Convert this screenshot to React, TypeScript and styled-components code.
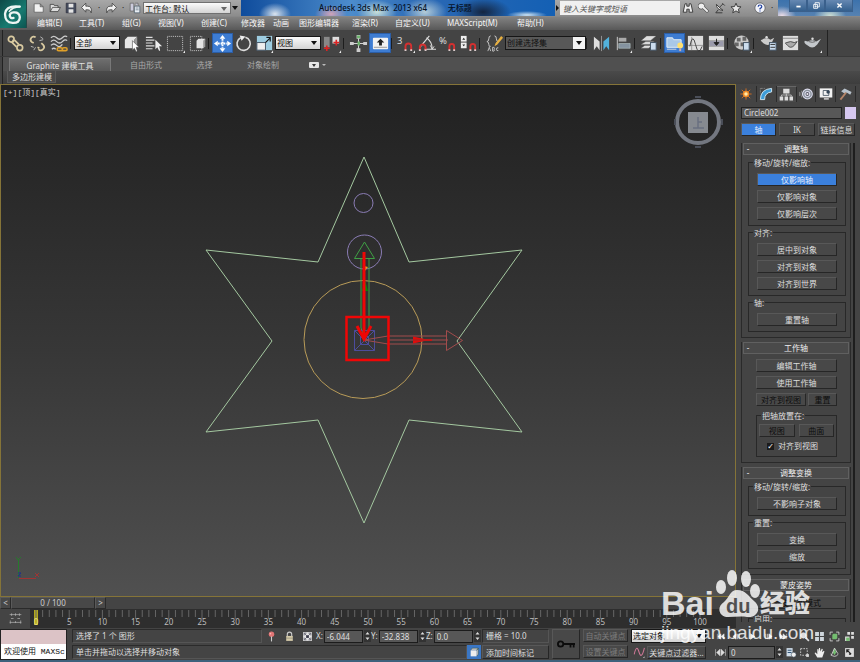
import React from "react";
import styled, { createGlobalStyle, css } from "styled-components";

const Global = createGlobalStyle`
  *, *::before, *::after { box-sizing: border-box; }
  html, body { margin: 0; background: #444; }
  body, button, input, select {
    font-family: "Noto Sans", "Noto Sans CJK SC", sans-serif;
    font-size: 8px;
    line-height: 12px;
    color: #dedede;
  }
  button, input, select { margin: 0; padding: 0; border: 0; border-radius: 0; background: none; appearance: none; outline: 0; }
`;

/* ---------- page frame ---------- */

const Page = styled.div`
  position: relative;
  display: flex;
  flex-direction: column;
  height: 100vh;
  overflow: hidden;
  background: #444;
`;

const Row = styled.div<{ $gap?: number }>`
  display: flex;
  align-items: center;
  gap: ${(p) => p.$gap ?? 0}px;
`;

/* ---------- header ---------- */

const Header = styled.header`
  flex: none;
  display: grid;
  grid-template-columns: 27px 1fr;
  height: 30px;
  background: linear-gradient(#8e8e8e 0 16px, #828282 17px, #585858 30px);
`;

const AppButton = styled.button`
  height: 28px;
  display: grid;
  place-items: center;
  border-right: 1px solid #254a48;
  background: linear-gradient(135deg, #0d4a48, #177a70 60%, #0c5450);
`;

const TitleBar = styled.div`
  display: flex;
  height: 16px;
  background: #174c98;
`;

const QuickAccess = styled.div`
  display: flex;
  align-items: center;
  width: 214px;
  padding-left: 4px;
  background: linear-gradient(#a8a8a8, #8c8c8c);
`;

const QuickButton = styled.button<{ $narrow?: boolean }>`
  width: ${(p) => (p.$narrow ? 8 : 16)}px;
  height: 15px;
  display: grid;
  place-items: center;
  color: #222;
`;

const TitleText = styled.h1`
  flex: 1;
  margin: 0;
  padding-left: 78px;
  font-size: 8px;
  font-weight: 500;
  line-height: 15px;
  color: #061226;
  white-space: pre;
  background:
    radial-gradient(ellipse 16px 11px at 34px 14px, #dbe4ee, transparent),
    radial-gradient(ellipse 16px 9px at 90px 14px, #d2a4b8, transparent),
    radial-gradient(ellipse 20px 12px at 136px 12px, #c9dfd9, transparent),
    radial-gradient(ellipse 22px 14px at 184px 12px, #b4ccd8, transparent),
    radial-gradient(ellipse 28px 14px at 242px 12px, #142540, transparent),
    radial-gradient(ellipse 20px 4px at 286px 15px, #d0e4f2, transparent),
    linear-gradient(90deg, #0f4c9c, #4c8ccc 35%, #2a68b4 58%, #1460b4);
`;

const InfoCenter = styled.div`
  display: flex;
  align-items: center;
  width: 223px;
  background: linear-gradient(#a8a8a8, #8c8c8c);
`;

const SearchArrow = styled.button`
  width: 5px;
  display: grid;
  place-items: center;
`;

const SearchInput = styled.input`
  width: 120px;
  height: 14px;
  padding-left: 3px;
  background: #f0f0f0;
  color: #333;
  &::placeholder { color: #555; font-style: italic; opacity: 1; }
`;

const WindowButtons = styled.div`
  display: flex;
  width: 82px;
  align-items: flex-start;
  padding-left: 11px;
  background:
    radial-gradient(ellipse 14px 10px at 4px 16px, #f0dfe8, transparent),
    radial-gradient(ellipse 16px 10px at 52px 16px, #cfe0d4, transparent),
    linear-gradient(#3c72ac, #5682b2);
`;

const WindowButton = styled.button`
  width: 18px;
  height: 12px;
  display: grid;
  place-items: center;
  border: 1px solid #3a608c;
  border-top: 0;
  background: linear-gradient(#6688b2, #34608e);
  &:last-child { width: 28px; }
`;

const MenuBar = styled.nav`
  display: grid;
  grid-template-columns: 42px 43px 36px 43px 40px 32px 26px 53px 43px 52px 70px 42px;
  padding-left: 10px;
  height: 14px;
`;

const MenuItem = styled.button`
  text-align: left;
  white-space: nowrap;
  line-height: 14px;
  color: #f6f6f6;
`;

/* ---------- toolbar ---------- */

const Toolbar = styled.div`
  flex: none;
  display: flex;
  align-items: center;
  align-self: flex-start;
  height: 26px;
  padding: 0 4px;
  border-right: 1px solid #222;
  background: #444;
  box-shadow: inset 2px 0 #444, inset 3px 0 #222;
`;

const ToolGroup = styled.div<{ $cell: number }>`
  display: grid;
  grid-auto-flow: column;
  grid-auto-columns: ${(p) => p.$cell}px;
`;

const ToolButton = styled.button<{ $on?: boolean }>`
  height: 20px;
  display: grid;
  place-items: center;
  ${(p) => p.$on && css`background: #3d7cd2; box-shadow: inset 0 0 0 1px #2c5ea6;`}
`;

const Separator = styled.span`
  width: 4px;
  height: 11px;
  border-left: 1px solid #1d1d1d;
`;

const Combo = styled.label<{ $w: number; $tone?: "dark" | "bar" }>`
  display: grid;
  grid-template-columns: 1fr 13px;
  align-items: center;
  width: ${(p) => p.$w}px;
  height: ${(p) => (p.$tone === "bar" ? 12 : 14)}px;
  border: 1px solid ${(p) => (p.$tone === "bar" ? "#707070" : "#161616")};
  background: ${(p) =>
    p.$tone === "dark"
      ? "linear-gradient(90deg, #585858 0 67px, #f3f3f3 67px)"
      : "linear-gradient(#fafafa, #d4d4d4)"};
  > select {
    grid-area: 1 / 1 / 2 / 3;
    min-width: 0;
    width: 100%;
    height: 12px;
    line-height: 12px;
    padding-left: 1px;
    color: #111;
  }
  > svg { grid-area: 1 / 2; justify-self: center; pointer-events: none; }
`;

/* ---------- ribbon ---------- */

const RibbonTabs = styled.div`
  flex: none;
  display: grid;
  grid-template-columns: 102px 70px 47px 70px 40px;
  align-items: end;
  padding-left: 9px;
  height: 15px;
  background: #505050;
  border-top: 1px solid #393939;
  box-shadow: inset 2px 0 #444, inset 3px 0 #222;
`;

const RibbonTab = styled.button<{ $on?: boolean }>`
  height: 13px;
  line-height: 13px;
  color: ${(p) => (p.$on ? "#e2e2e2" : "#a8a8a8")};
  ${(p) => p.$on && css`
    line-height: 11px;
    border: 1px solid #787878;
    border-bottom: 0;
    background: linear-gradient(#6e6e6e, #575757);
  `}
`;

const RibbonBody = styled.div`
  flex: none;
  height: 13px;
  padding-left: 7px;
  background: linear-gradient(#4a4a4a, #3d3d3d);
  box-shadow: inset 2px 0 #444, inset 3px 0 #222;
`;

const RibbonPanelButton = styled.button`
  height: 12px;
  padding: 0 3px 0 4px;
  border: 1px solid #5a5a5a;
  border-top: 0;
  line-height: 11px;
  background: #4a4a4a;
`;

/* ---------- work area ---------- */

const Work = styled.main`
  flex: 1;
  display: grid;
  grid-template-columns: 1fr 124px;
  grid-template-rows: minmax(0, 1fr);
  min-height: 0;
`;

const Stage = styled.section`
  display: flex;
  flex-direction: column;
`;

const Viewport = styled.div`
  position: relative;
  flex: 1;
  display: flex;
  justify-content: space-between;
  align-items: flex-start;
  border: 1px solid #857438;
  background: linear-gradient(#212121, #373737 52%, #505050);
`;

const ViewLabel = styled.span`
  padding: 2px 2px;
  color: #d0d0d0;
  font-family: "Liberation Mono", "Noto Sans CJK SC", monospace;
`;

const Scene = styled.svg`
  position: absolute;
  inset: -1px;
  width: calc(100% + 2px);
  height: calc(100% + 2px);
  fill: none;
`;

const CubeHolder = styled.div`
  padding: 7px 11px;
  line-height: 0;
`;

const SliderRow = styled.div`
  display: grid;
  grid-template-columns: 11px 84px 11px;
  height: 12px;
  background: #444;
`;

const SliderPart = styled.button`
  border: 1px solid #2a2a2a;
  border-top-color: #5a5a5a;
  border-left-color: #5a5a5a;
  background: #484848;
  line-height: 10px;
  color: #ccc;
`;

const TrackBar = styled.div`
  display: grid;
  grid-template-columns: 36px 1fr 36px;
  height: 19px;
  background: #2e2e2e;
  > svg:last-of-type { width: 100%; height: 19px; overflow: visible; }
`;

const TrackToggle = styled.button`
  width: 30px;
  background: #444;
  display: grid;
  place-items: center;
`;

/* ---------- command panel ---------- */

const Side = styled.aside`
  overflow: hidden;
  margin-bottom: 6px;
  padding: 2px 4px 0 5px;
  background: #444;
`;

const PanelTabs = styled.div`
  display: grid;
  grid-template-columns: repeat(6, 1fr);
  height: 16px;
  margin: 0 0 5px -4px;
`;

const PanelTab = styled.button<{ $on?: boolean }>`
  display: grid;
  place-items: center;
  border-right: 1px solid #2b2b2b;
  ${(p) => p.$on && css`border-top: 1px solid #666; background: #4b4b4b;`}
`;

const NameInput = styled.input`
  flex: 1;
  min-width: 0;
  height: 12px;
  padding-left: 2px;
  border: 1px solid #222;
  background: #585858;
`;

const Swatch = styled.button`
  width: 11px;
  height: 12px;
  background: #d6c8f0;
`;

const tones = {
  normal: "#dedede",
  dim: "#0c0c0c",
  muted: "#7c7c7c",
};

const PushButton = styled.button<{ $on?: boolean; $tone?: keyof typeof tones }>`
  height: 13px;
  flex: 1;
  white-space: nowrap;
  line-height: 11px;
  border: 1px solid;
  border-color: #585858 #262626 #262626 #585858;
  background: ${(p) => (p.$on ? "#3b80dc" : "#484848")};
  color: ${(p) => (p.$on ? "#e4eeff" : tones[p.$tone ?? "normal"])};
`;

const PanelButtons = styled.div`
  display: grid;
  grid-template-columns: 35px 36px 37px;
  gap: 3px;
  padding: 4px 0 7px;
`;

const Rollouts = styled.div`
  margin-right: 1px;
  padding-right: 2px;
  border-right: 2px solid #1e1e1e;
`;

const Rollout = styled.section`
  margin-bottom: 4px;
  padding: 0 1px;
  border: 1px solid #2a2a2a;
  border-top: 0;
`;

const RolloutHeader = styled.button`
  display: grid;
  grid-template-columns: 8px 1fr 8px;
  width: 100%;
  height: 12px;
  border: 1px solid #606060;
  background: #4a4a4a;
  line-height: 10px;
  color: #eee;
`;

const RolloutBody = styled.div<{ $deep?: boolean }>`
  display: flex;
  flex-direction: column;
  gap: 4px;
  padding: ${(p) => (p.$deep ? "5px 12px 5px 13px" : "5px 3px 5px 5px")};
  > button { flex: none; }
`;

const Split = styled.div`
  display: grid;
  grid-template-columns: 50px 1fr;
  gap: 2px;
`;

const Group = styled.fieldset<{ $tight?: boolean }>`
  min-width: 0;
  margin: 0;
  padding: ${(p) => (p.$tight ? "3px 2px 5px" : "5px 8px")};
  border: 1px solid #282828;
  display: flex;
  flex-direction: column;
  gap: 4px;
  &:first-child, fieldset + & { margin-top: -3px; }
  > legend { margin-left: ${(p) => (p.$tight ? 2 : -4)}px; padding: 0 1px; line-height: 11px; }
  > button { flex: none; }
`;

const CheckLabel = styled.label`
  display: flex;
  align-items: center;
  gap: 4px;
  padding-left: 8px;
  height: 10px;
`;

const CheckBox = styled.input`
  width: 7px;
  height: 7px;
  background: #1b1b1b;
  display: grid;
  place-items: center;
  &:checked::after { content: "✓"; font: bold 8px/7px "DejaVu Sans", sans-serif; color: #fff; }
`;

/* ---------- status bar ---------- */

const Status = styled.footer`
  flex: none;
  display: flex;
  height: 34px;
  padding-top: 1px;
  background: #444;
  border-bottom: 2px solid #3d617c;
`;

const TwoRows = styled.div<{ $w?: number; $ml?: number }>`
  ${(p) => (p.$w ? css`width: ${p.$w}px;` : css`flex: 1;`)}
  min-width: 0;
  margin-left: ${(p) => p.$ml ?? 3}px;
  display: grid;
  grid-template-rows: 14px 14px;
  row-gap: 2px;
`;

const Listener = styled.div`
  width: 67px;
  height: 31px;
  display: grid;
  grid-template-rows: 14px 15px;
  border: 1px solid #222;
  > input:first-child { background: #dcc3c6; }
  > input:last-child { background: #fff; color: #111; padding-left: 3px; font-family: "Liberation Mono", "Noto Sans CJK SC", monospace; }
  > input { min-width: 0; width: 100%; }
`;

const Cell = styled.output`
  flex: 1;
  height: 14px;
  padding-left: 3px;
  line-height: 12px;
  white-space: nowrap;
  border: 1px solid #2b2b2b;
  border-right-color: #555;
  border-bottom-color: #555;
`;

const CellButton = styled(PushButton)`
  height: 14px;
  text-align: left;
  padding-left: 3px;
`;

const SmallButton = styled.button<{ $w?: number; $on?: boolean }>`
  width: ${(p) => p.$w ?? 16}px;
  height: 14px;
  flex: none;
  display: grid;
  place-items: center;
  background: ${(p) => (p.$on ? "#3a76c4" : "none")};
`;

const KeyButton = styled(PushButton)`
  flex: none;
  width: 28px;
  height: 30px;
  margin-left: 3px;
  display: grid;
  place-items: center;
`;

const SpinField = styled.label`
  display: flex;
  align-items: center;
  gap: 1px;
  width: 55px;
  > input {
    flex: 1;
    min-width: 0;
    height: 13px;
    padding-left: 2px;
    border: 1px solid #1c1c1c;
    background: #575757;
  }
`;

const NavGrid = styled.div`
  display: grid;
  grid-template-columns: 13px repeat(4, 15px);
  grid-template-rows: 14px 14px;
  row-gap: 2px;
  margin-right: 3px;
`;

/* ---------- watermark ---------- */

const Mark = styled.div`
  position: absolute;
  right: 40px;
  bottom: 18px;
  width: 159px;
  opacity: 0.82;
  color: #fff;
  pointer-events: none;
  font-family: "Liberation Sans", "Noto Sans CJK SC", sans-serif;
`;

const MarkTop = styled.div`
  display: grid;
  grid-template-columns: 54px 45px 54px;
  align-items: end;
  font-weight: 700;
  line-height: 30px;
  > b:first-child { font-size: 34px; }
  > b:last-child { font-size: 25px; }
`;

const MarkUrl = styled.div`
  margin-top: 4px;
  font-size: 19px;
  line-height: 22px;
`;

/* ---------- icons ---------- */

const art: Record<string, React.ReactNode> = {
  link: <g stroke="#d8c9a0" strokeWidth="1.8"><circle cx="5.500" cy="5.500" r="3" /><circle cx="14.500" cy="14.500" r="3" /><path d="M8 6l-1.500 3 4.500 4.500M9 6.500l4.500 4.500" /></g>,
  unlink: <g stroke="#d8c9a0" strokeWidth="1.8"><path d="M8 3.500a3 3 0 1 0-4 5l2 1M11 16a3 3 0 0 0 5-4.500l-2-2M12 15l-2-1" /><path d="M13 3l3 2M12 7l4-1M3 13l3 1M6 17l2-3" stroke="#bbb" strokeWidth="1" /></g>,
  bind: <g><path d="M1 4q3-3 6 0t6 0 5-1M1 8q3-3 6 0t6 0 5-1M1 12q3-3 6 0t6-1M2 16q2-2 4 0" stroke="#ccc" strokeWidth="1.4" /><path d="M9 14.500h2.500a1.500 1.500 0 0 1 0 3H9a1.500 1.500 0 0 1 0-3zM14.500 14.500h2a1.500 1.500 0 0 1 0 3h-2a1.500 1.500 0 0 1 0-3z" stroke="#e0a028" strokeWidth="1.6" /></g>,
  select: <g><path d="M3 6l3-3h10l-3 3v9H3z" fill="#e8e8e8" /><path d="M13 6l3-3v9l-3 3z" fill="#999" /><path d="M11 7v10l2-2 2 4 1-1-1-4h3z" fill="#fff" stroke="#444" strokeWidth=".6" /></g>,
  byName: <g><path d="M2 3.500h7M2 6.500h9M2 9.500h7M2 12.500h9M2 15.500h7" stroke="#ddd" strokeWidth="1.200" /><path d="M12 6v10l2-2 2 4 1-1-1-4h3z" fill="#eee" /></g>,
  region: <g><rect x="1.500" y="2.500" width="16" height="15" stroke="#ccc" strokeDasharray="1 1" /><path d="M18 20h2v-3z" fill="#eee" /></g>,
  crossing: <g><rect x="2.500" y="2.500" width="12" height="15" stroke="#ccc" strokeDasharray="1 1" /><path d="M9 7l2-2h7v8l-2 2H9z" fill="#e4e4e4" /><path d="M16 7l2-2v8l-2 2z" fill="#999" /></g>,
  move: <g fill="#fff"><path d="M10 1l3 4H7zM10 19l3-4H7zM1 10l4-3v6zM19 10l-4-3v6z" /><path d="M10 5v10M5 10h10" stroke="#fff" strokeDasharray="2 1" strokeWidth="2" /></g>,
  rotate: <g><path d="M12 3.500a7 7 0 1 1-5 .500" stroke="#ddd" strokeWidth="1.700" /><path d="M6 1.500l6 1-4 4.500z" fill="#eee" /></g>,
  scale: <g><rect x="2" y="2" width="16" height="15" fill="#9dcce0" /><rect x="2" y="9" width="9" height="8" fill="#eee" stroke="#456" /><path d="M11 9l5-5M12 3.500h4V8" stroke="#111" strokeWidth="1.200" /><path d="M17 20h2v-3z" fill="#eee" /></g>,
  pivot: <g><rect x="1" y="3" width="6" height="11" fill="#888" /><rect x="10" y="3" width="7" height="7" fill="#ddd" /><path d="M4 12v6M1 15h6M14 6v6M11 9h6" stroke="#d22" strokeWidth="1.700" /><path d="M17 20h2v-3z" fill="#eee" /></g>,
  manip: <g><path d="M10 4v12M4 10h12" stroke="#ddd" /><path d="M8 1h4v4H8zM8 15h4v4H8zM1 8.500h4v3H1zM15 8.500h4v3h-4z" fill="#ccc" /><path d="M8.500 1.500h3v3h-3zM9 8h2.500v4H9z" fill="#6cb46c" /></g>,
  keymode: <g><rect x="2" y="4" width="16" height="12" rx="1" fill="#f2f2f2" /><path d="M3 14h14" stroke="#999" /><path d="M10 5l4 4h-2.500v3h-3V9H6z" fill="#222" /></g>,
  snap3: <g><text x="1" y="11" fontSize="10" fill="#ddd">3</text><path d="M10 17v-4a3 3 0 0 1 6 0v4" stroke="#d43030" strokeWidth="2" /><path d="M9 17h2M15 17h2" stroke="#fff" strokeWidth="1.500" /><path d="M18 20h2v-3z" fill="#eee" /></g>,
  angle: <g><path d="M3 14L13 2M10 4q6 4 6 12M8 16h12" stroke="#ddd" strokeWidth="1.200" /><path d="M3 17v-3a3 3 0 0 1 6 0v3" stroke="#d43030" strokeWidth="2" /><path d="M2 17h2M8 17h2" stroke="#fff" strokeWidth="1.500" /><path d="M14 12l2 4 2-3" stroke="#ddd" /></g>,
  percent: <g><text x="1" y="11" fontSize="10" fill="#ddd">%</text><path d="M12 17v-4a2.500 2.500 0 0 1 5 0v4" stroke="#d43030" strokeWidth="2" /><path d="M11 17h2M16 17h2" stroke="#fff" strokeWidth="1.500" /></g>,
  spinSnap: <g><rect x="2" y="2" width="6" height="6" fill="#eee" /><rect x="2" y="9" width="6" height="6" fill="#eee" /><path d="M3.500 6L5 4l1.500 2zM3.500 11L5 13l1.500-2z" fill="#222" /><path d="M12 17v-4a2.500 2.500 0 0 1 5 0v4" stroke="#d43030" strokeWidth="2" /><path d="M11 17h2M16 17h2" stroke="#fff" strokeWidth="1.500" /></g>,
  namedSel: <g><path d="M6 2Q4 2 4 5t-2 3q2 0 2 3t2 2M10 2q2 0 2 3t2 3q-2 0-2 3" stroke="#ccc" /><path d="M17 2l-6 8-1 3 3-2 6-7z" fill="#e8b040" /><path d="M3 18l1.500-4L6 18M8 14v4h1.500q1-1 0-2 1-1 0-2zM14 14.500q-2-.500-2 1.500t2 1.500" stroke="#ddd" strokeWidth=".8" /></g>,
  mirror: <g><path d="M2 3l6 5v9l-3-4-3 4z" fill="#ddd" /><path d="M18 3l-6 5v9l3-4 3 4z" fill="#52b2dc" /><path d="M10 2v16" stroke="#aaa" strokeWidth=".8" /></g>,
  align: <g><path d="M3.500 3v14" stroke="#ccc" /><path d="M5 4h8v4H5z" fill="#aaa" /><path d="M5 10h12v5H5z" fill="#8593a0" stroke="#bcc" strokeWidth=".6" /><path d="M17 20h2v-3z" fill="#eee" /></g>,
  layers: <g><path d="M1 7l6-5h10l-6 5zM1 11l5-3h9l-5 3zM1 15l4-3h8l-4 3z" fill="#ddd" stroke="#555" strokeWidth=".4" /><rect x="11" y="9" width="6" height="8" fill="#cde" stroke="#456" /></g>,
  ribbon: <g><path d="M2 4h6l1 2h8v8H2z" fill="#a9c8e8" stroke="#e8f0f8" /><path d="M2 16h10" stroke="#ddd" /><circle cx="16" cy="12" r="3" fill="#ffe070" /><path d="M15 15h2v3h-2z" fill="#caa" /></g>,
  curve: <g><rect x="2" y="2" width="16" height="15" fill="#ddd" /><path d="M2 12h16M6 3v14" stroke="#777" strokeWidth=".7" /><path d="M4 13q3-15 6-2t7 2" stroke="#333" strokeWidth=".9" /></g>,
  schematic: <g><rect x="2" y="2" width="16" height="5" fill="#ddd" /><rect x="2" y="13" width="16" height="4" fill="#ddd" /><path d="M2.500 7h15v6h-15z" stroke="#aaa" fill="#99a" /><path d="M10 5v5M7.500 9L10 12l2.500-3z" stroke="#222" fill="#222" /></g>,
  material: <g><circle cx="9" cy="9" r="7.500" fill="#ccc" /><path d="M4 4h4v4H4zM10 3h4v4h-4zM2 9h4v4H2zM8 9h4v4H8z" fill="#666" /><rect x="11" y="9" width="6" height="8" fill="#cde" stroke="#456" /><path d="M18 20h2v-3z" fill="#eee" /></g>,
  rsetup: <g><path d="M3 6q5-3 9 0l4-2-3 6q-4 3-8 0Q0 6 3 6z" fill="#ccc" /><circle cx="8" cy="3.500" r="1.300" fill="#ddd" /><rect x="11" y="9" width="7" height="8" fill="#cde" stroke="#456" /><path d="M12 11h5M12 14h5" stroke="#333" /></g>,
  rframe: <g><rect x="2" y="2" width="16" height="15" fill="#ddd" /><path d="M2 4.500h16" stroke="#888" /><path d="M6 9q4-2 8 0l3-1-3 4q-4 4-7 0Q3 9 6 9z" fill="#aaa" stroke="#333" strokeWidth=".8" /></g>,
  teapot: <g><path d="M5 8q5-3 9 0l5-3-4 6q-5 6-10 1Q0 9 2 7z" fill="#c4c8cc" /><path d="M6 8q4 1.500 7 0" stroke="#666" /><circle cx="10" cy="5" r="1.300" fill="#ddd" /><path d="M18 20h2v-3z" fill="#eee" /></g>,
  newFile: <path d="M2 3h10l5 5v9H2zM12 3v5h5" fill="#f2f2f2" stroke="#444" />,
  open: <path d="M2 16V4h6l1 2h6v3M2 16l4-7h13l-4 7z" fill="#ddd" stroke="#333" strokeWidth="1.200" />,
  save: <g><path d="M2 2h16v16H2z" fill="#444b5c" stroke="#223" /><path d="M6 3h8v6H6zM6 12h8v6H6z" fill="#e4e4e4" /></g>,
  undo: <path d="M1 9l7-7v5h3q8 0 6 11-1-6-9-5v4z" fill="#f2f2f2" stroke="#333" strokeWidth="1.200" />,
  redo: <path d="M19 9l-7-7v5H9Q1 7 3 18q1-6 9-5v4z" fill="#f2f2f2" stroke="#333" strokeWidth="1.200" />,
  project: <g><path d="M2 2h6v13H2zM10 2h5v5" fill="#ccd" stroke="#555" /><path d="M9 7h9v11H9z" fill="#e8eef4" stroke="#345" /><path d="M11 10h5M11 13h5" stroke="#456" /></g>,
  binoc: <path d="M5 3h3v4h4V3h3l3 14h-6v-5H8v5H2z" fill="#eee" stroke="#333" strokeWidth="1.500" />,
  wrench: <path d="M6 2a5 5 0 1 0 2 9l7 7 3-3-7-7a5 5 0 0 0-5-6z" fill="#eee" stroke="#444" strokeWidth="1.300" />,
  dish: <g stroke="#333" strokeWidth="1.500"><path d="M4 4q0 9 11 10L9 9z" fill="#eee" /><path d="M9 9l6-6M7 13l-4 5h11M14 2l4 4" /></g>,
  star: <path d="M10 2l2.400 5.600 6 .4-4.500 4 1.500 6-5.400-3.200L4.600 18l1.500-6L1.600 8l6-.4z" fill="#e8e8e8" stroke="#333" strokeWidth="1.500" />,
  help: <g><circle cx="10" cy="10" r="8.500" fill="#f2f4fa" stroke="#444" /><path d="M7 8q0-3 3-3t3 3q0 1.500-3 3v1.500M10 14v2" stroke="#2040a0" strokeWidth="2" /></g>,
  create: <g><path d="M10 2v16M2 10h16M4 4l12 12M16 4L4 16" stroke="#d87020" strokeWidth="1.300" /><circle cx="10" cy="10" r="4.500" fill="#f08c28" /><circle cx="10" cy="10" r="2.500" fill="#ffe9a8" /></g>,
  modify: <g><path d="M2 18Q2 3 18 2v5Q8 8 8 18z" fill="#3e9cd8" stroke="#d8eef8" strokeWidth="1.300" /><path d="M2 9V2h7" stroke="#bbb" strokeDasharray="1 1" /></g>,
  hierarchy: <g><path d="M6 1h9v7H6zM1 12h5v6H1zM8 12h5v6H8zM15 12h5v6h-5z" fill="#ddd" /><path d="M10.500 8v4M3.500 12v-2h14v2" stroke="#ddd" /></g>,
  motion: <g><circle cx="12" cy="10" r="7" fill="#8a929c" stroke="#dde" strokeWidth="1.500" /><circle cx="12" cy="10" r="3.500" fill="#556" stroke="#dde" strokeWidth="1.500" /><circle cx="12" cy="10" r="1.500" fill="#eee" /><path d="M4 5q-3 5 0 10M1 7q-1 3 0 6" stroke="#999" /></g>,
  display: <g><rect x="1" y="2" width="18" height="13" fill="#f2f2f2" /><path d="M6 5h8v7H6z" stroke="#234" /><circle cx="13" cy="7" r="2.500" fill="#345" /><path d="M7 17h7" stroke="#ddd" strokeWidth="2" /></g>,
  hammer: <g><path d="M3 6l5-4 10 5-2 4-5-3-2 2z" fill="#b8c2cc" /><path d="M10 8L2 18" stroke="#b48468" strokeWidth="2.500" /></g>,
  pin: <g><circle cx="10" cy="6" r="5" fill="#e07474" /><path d="M10 10v9" stroke="#ccc" strokeWidth="2" /><circle cx="8" cy="5" r="1.500" fill="#fbb" /></g>,
  lock: <g><path d="M6 9V6a4 4 0 0 1 8 0v3" stroke="#ccc" strokeWidth="2" /><rect x="4" y="9" width="12" height="9" fill="#d4c9a8" /><path d="M4 13h12" stroke="#776" /></g>,
  absMode: <g><rect x="2" y="2" width="16" height="16" fill="#e4e4e4" /><path d="M4 8V4h4M12 4h4v4M16 12v4h-4M8 16H4v-4M5 5l10 10M15 5L5 15" stroke="#445" strokeWidth="1.300" /><circle cx="10" cy="10" r="2.500" fill="#334" /></g>,
  cube: <g><path d="M3 6h11v11H3z" fill="#eee" /><path d="M3 6l3-4h11l-3 4M14 6l3-4v11l-3 4" fill="#bbb" stroke="#355" /></g>,
  key: <g><circle cx="4" cy="10" r="3" stroke="#0c0c0c" strokeWidth="2" /><path d="M7 10h13M15 10v4M18.500 10v4" stroke="#0c0c0c" strokeWidth="2" /></g>,
  tangent: <g><path d="M2 14q4-18 8-4t9-7" stroke="#d07898" strokeWidth="1.700" /><path d="M17 20h2v-3z" fill="#eee" /></g>,
  trackMini: <g stroke="#bbb"><path d="M1 4h18M4 2v4M10 2v4M16 2v4M3 10h4M13 10h4M1 16h18M2 13v5M10 14v3M18 13v5" /></g>,
  first: <path d="M3 4v12M11 4l-7 6 7 6zM18 4l-7 6 7 6z" fill="#eee" stroke="#eee" />,
  prev: <path d="M9 4l-7 6 7 6zM12 4v12M16 4v12" fill="#eee" stroke="#eee" strokeWidth="1.500" />,
  play: <path d="M5 3v14l11-7z" fill="#eee" />,
  next: <path d="M11 4l7 6-7 6zM4 4v12M8 4v12" fill="#eee" stroke="#eee" strokeWidth="1.500" />,
  last: <path d="M17 4v12M9 4l7 6-7 6zM2 4l7 6-7 6z" fill="#eee" stroke="#eee" />,
  keyStep: <path d="M1 4v12M19 4v12M9 4l-6 6 6 6zM11 4l6 6-6 6z" fill="#ddd" stroke="#ddd" />,
  timeCfg: <g><rect x="1" y="2" width="11" height="15" fill="#cfdce8" /><path d="M3 6h7M3 10h7" stroke="#357" strokeWidth="2" /><circle cx="14" cy="14" r="4.500" fill="#eee" stroke="#345" /></g>,
  zoom: <g><circle cx="8" cy="8" r="5" fill="#ddd" stroke="#eee" /><path d="M12 12l6 6" stroke="#ddd" strokeWidth="3" /></g>,
  zoomAll: <path d="M2 2h7v7H2zM11 2h7v7h-7zM2 11h7v7H2zM11 11h7v7h-7z" fill="#cfd6dc" />,
  extents: <g><path d="M2 7V2h5M13 2h5v5M18 13v5h-5M7 18H2v-5" stroke="#ddd" strokeWidth="1.500" /><path d="M6 7l2-2h7v8l-2 2H6z" fill="#74bd70" /></g>,
  extAll: <g><path d="M6 2h5v5H6zM13 2h5v5h-5zM2 10h8v8H2zM13 9h5v5h-5z" fill="#ddd" /><path d="M4 12h6v6H4z" fill="#74bd70" /></g>,
  zoomRegion: <g><rect x="3" y="3" width="12" height="12" stroke="#ddd" strokeWidth="1.500" strokeDasharray="3 2" /><path d="M13 13h5v5h-5z" fill="#ddd" /></g>,
  pan: <path d="M6 19L1 11l2-1 3 3V4l2-.500 1 5V2h2l.500 6L14 3l2 .500-1.500 6L18 7l1 1-4 11z" fill="#eee" />,
  orbit: <g><path d="M10 2l3 8-3 5-3-5z" fill="#74bd70" /><path d="M3 13q7 8 14 0M10 2L4 16M10 2l6 10" stroke="#ddd" strokeWidth="1.500" /></g>,
  maxView: <g><path d="M2 2h16v16H2z" fill="#ddd" /><path d="M5 5l8 8M5 10V5h5M13 13h-4" stroke="#222" strokeWidth="2" /></g>,
  minimize: <path d="M4 13h12" stroke="#fff" strokeWidth="5" />,
  restore: <path d="M6 7V2h12v12h-5M2 7h11v11H2zM6 11h3v3H6z" stroke="#fff" strokeWidth="2.500" />,
  close: <path d="M4 4l12 12M16 4L4 16" stroke="#fff" strokeWidth="4" />,
  logo: <g stroke="#edf5f3" strokeLinecap="round" strokeWidth="2.200"><path d="M16 2.500Q3 1 2 9q-.500 8.500 7 9 7 .500 7-5.500-.500-5-6-4.500-4 .500-3.500 3.500.500 2.500 3.500 1.800" /><path d="M16 2.500Q9 3 6 7" strokeWidth="1.500" /></g>,
};

const Icon = ({ name, size = 19 }: { name: string; size?: number }) => (
  <svg width={size} height={size} viewBox="0 0 20 20" fill="none" aria-hidden="true">{art[name]}</svg>
);

const Arrow = ({ color = "#111" }: { color?: string }) => (
  <svg width="6" height="4" viewBox="0 0 6 4" aria-hidden="true"><path d="M0 0h6L3 4z" fill={color} /></svg>
);

const SpinArrows = () => (
  <svg width="7" height="12" viewBox="0 0 7 12" aria-hidden="true">
    <path d="M0 0h7v12H0z" fill="#333" />
    <path d="M1.500 4.500h4L3.500 2zM1.500 7.500h4l-2 2.500z" fill="#ddd" />
  </svg>
);

/* ---------- pieces ---------- */

const Tools = ({ cell = 22, items, on }: { cell?: number; items: [string, string][]; on?: string }) => (
  <ToolGroup $cell={cell}>
    {items.map(([name, label]) => (
      <ToolButton key={name} $on={name === on} aria-label={label}><Icon name={name} /></ToolButton>
    ))}
  </ToolGroup>
);

const Pick = ({ w, tone, label, value }: { w: number; tone?: "dark" | "bar"; label: string; value: string }) => (
  <Combo $w={w} $tone={tone}>
    <select aria-label={label} defaultValue={value}><option>{value}</option></select>
    <Arrow color={tone === "bar" ? "#666" : "#111"} />
  </Combo>
);

const Section = ({ title, deep, children }: { title: string; deep?: boolean; children: React.ReactNode }) => (
  <Rollout>
    <RolloutHeader><span>-</span><span>{title}</span></RolloutHeader>
    <RolloutBody $deep={deep}>{children}</RolloutBody>
  </Rollout>
);

const Coordinate = ({ axis, value }: { axis: string; value: string }) => (
  <SpinField>{axis}:<input defaultValue={value} /><SpinArrows /></SpinField>
);

const menus = ["编辑(E)", "工具(T)", "组(G)", "视图(V)", "创建(C)", "修改器", "动画", "图形编辑器", "渲染(R)", "自定义(U)", "MAXScript(M)", "帮助(H)"];

const Drawing = () => (
  <Scene viewBox="0 84 736 513" aria-label="顶视图">
    <path d="M364 157l45 105 113-12-65 91 65 91-113-12-45 103-46-103-112 12 66-91-66-91 112 12z" stroke="#a4c8a0" />
    <circle cx="363.500" cy="203" r="9.500" stroke="#8a7cb4" />
    <circle cx="364.500" cy="252" r="17" stroke="#8a7cb4" />
    <circle cx="363" cy="339.500" r="59" stroke="#b89b58" />
    <path d="M361 258v70l4 11 4-11v-70M354.500 258.500h20L364.500 242z" stroke="#3fa044" />
    <path d="M365 280l3 11h-6z" fill="#088808" />
    <path d="M354.500 330.500h20v20h-20zl20 20M374.500 330.500l-20 20M360.500 336.500h8v8h-8z" stroke="#4c4c9c" />
    <path d="M364 340l24-4h59M364 340l24 4h59M388 340h60M446.500 330.500v20l16-10z" stroke="#a24c4c" />
    <path d="M413 336.500l16 3.500-16 3.500z" fill="#e00c0c" />
    <path d="M413 340h19" stroke="#c01818" strokeWidth="2" />
    <path d="M364 266l4 1-4 5z" fill="#e0a020" />
    <path d="M346.500 317h42v43h-42z" stroke="#f00606" strokeWidth="2.500" />
    <path d="M364 252v84M357 326l7 13 7-13" stroke="#f00606" strokeWidth="3" />
    <path d="M18.500 578v-15M16 557l2 3 3-3M18.500 560v3" stroke="#267a2c" />
    <path d="M19 578.500h17M35 573l4 4m0-4l-4 4" stroke="#a03434" />
    <path d="M18 573h3l-3 3h3" stroke="#20308c" />
  </Scene>
);

const Cube = () => (
  <svg width="58" height="60" viewBox="0 0 58 60" fill="none" aria-label="ViewCube">
    <circle cx="32" cy="30" r="21" stroke="#737780" strokeWidth="4" />
    <path d="M22 20h20v21H22z" fill="#868a90" />
    <path d="M27 36h11M32 25v11M32 30h4" stroke="#697080" strokeWidth="1.500" />
    <path d="M29 5h6M29 55h6M9 27v6M56 27v6" stroke="#4a4e58" strokeWidth="2" />
  </svg>
);

const Ticks = () => (
  <svg aria-label="0 - 100">
    <rect x="-2" y="1" width="4" height="15" fill="#b4aa1c" />
    {Array.from({ length: 101 }, (_, i) => (
      <line key={i} x1={`${i}%`} x2={`${i}%`} y1={1} y2={i % 5 ? 8 : 10} stroke="#666" />
    ))}
    {Array.from({ length: 21 }, (_, i) => (
      <text key={i} x={`${i * 5}%`} y={16} textAnchor="middle" fontSize={8} fill={i ? "#bdbdbd" : "#eee48c"}>{i * 5}</text>
    ))}
  </svg>
);

export default function App() {
  return (
    <Page lang="zh-CN">
      <Global />
      <Header>
        <AppButton aria-label="应用程序"><Icon name="logo" size={21} /></AppButton>
        <div>
          <TitleBar>
            <QuickAccess>
              {[["newFile", "新建"], ["open", "打开"], ["save", "保存"], ["undo", "撤消"]].map(([n, l]) => (
                <QuickButton key={n} aria-label={l}><Icon name={n} size={12} /></QuickButton>
              ))}
              <QuickButton $narrow aria-label="撤消列表">·</QuickButton>
              <QuickButton aria-label="重做"><Icon name="redo" size={12} /></QuickButton>
              <QuickButton $narrow aria-label="重做列表">·</QuickButton>
              <QuickButton aria-label="项目文件夹"><Icon name="project" size={12} /></QuickButton>
              <Pick w={88} tone="bar" label="工作台" value="工作台: 默认" />
              <QuickButton $narrow aria-label="自定义"><Arrow /></QuickButton>
            </QuickAccess>
            <TitleText>{"Autodesk 3ds Max  2013 x64          无标题"}</TitleText>
            <InfoCenter>
              <SearchArrow aria-label="展开">
                <svg width="3" height="6" viewBox="0 0 3 6"><path d="M0 0v6l3-3z" fill="#111" /></svg>
              </SearchArrow>
              <SearchInput aria-label="搜索" placeholder="键入关键字或短语" />
              {[["binoc", "搜索"], ["wrench", "速博中心"], ["dish", "通讯中心"], ["star", "收藏夹"]].map(([n, l]) => (
                <QuickButton key={n} aria-label={l}><Icon name={n} size={12} /></QuickButton>
              ))}
              <QuickButton $narrow aria-hidden="true" tabIndex={-1} />
              <QuickButton aria-label="帮助"><Icon name="help" size={12} /></QuickButton>
              <QuickButton $narrow aria-label="帮助列表">·</QuickButton>
            </InfoCenter>
            <WindowButtons>
              {[["minimize", "最小化"], ["restore", "还原"], ["close", "关闭"]].map(([n, l]) => (
                <WindowButton key={n} aria-label={l}><Icon name={n} size={7} /></WindowButton>
              ))}
            </WindowButtons>
          </TitleBar>
          <MenuBar>{menus.map((m) => <MenuItem key={m}>{m}</MenuItem>)}</MenuBar>
        </div>
      </Header>

      <Toolbar>
        <Tools items={[["link", "选择并链接"], ["unlink", "断开链接"], ["bind", "绑定到空间扭曲"]]} />
        <Separator />
        <Pick w={46} label="选择过滤器" value="全部" />
        <Tools items={[["select", "选择对象"], ["byName", "按名称选择"], ["region", "矩形选择区域"], ["crossing", "窗口/交叉"]]} />
        <Separator />
        <Tools cell={21} on="move" items={[["move", "移动"], ["rotate", "旋转"], ["scale", "缩放"]]} />
        <Pick w={46} label="参考坐标系" value="视图" />
        <Tools items={[["pivot", "使用轴点中心"]]} />
        <Separator />
        <Tools on="keymode" items={[["manip", "选择并操纵"], ["keymode", "键盘快捷键覆盖"]]} />
        <Separator />
        <Tools cell={21} items={[["snap3", "捕捉开关"], ["angle", "角度捕捉"], ["percent", "百分比捕捉"], ["spinSnap", "微调器捕捉"]]} />
        <Separator />
        <Tools items={[["namedSel", "编辑命名选择集"]]} />
        <Pick w={81} tone="dark" label="命名选择集" value="创建选择集" />
        <Separator />
        <Tools items={[["mirror", "镜像"], ["align", "对齐"]]} />
        <Separator />
        <Tools items={[["layers", "层管理器"]]} />
        <Separator />
        <Tools cell={21} on="ribbon" items={[["ribbon", "石墨建模工具"], ["curve", "曲线编辑器"], ["schematic", "图解视图"]]} />
        <Separator />
        <Tools items={[["material", "材质编辑器"]]} />
        <Separator />
        <Tools items={[["rsetup", "渲染设置"], ["rframe", "渲染帧窗口"], ["teapot", "渲染产品"]]} />
      </Toolbar>

      <RibbonTabs>
        <RibbonTab $on>Graphite 建模工具</RibbonTab>
        <RibbonTab>自由形式</RibbonTab>
        <RibbonTab>选择</RibbonTab>
        <RibbonTab>对象绘制</RibbonTab>
        <RibbonTab aria-label="最小化功能区">
          <svg width="18" height="6" viewBox="0 0 18 6"><rect width="10" height="6" rx="1" fill="#e4e4e4" /><path d="M3 2h4L5 5z" fill="#333" /><path d="M13 2h4l-2 2z" fill="#bbb" /></svg>
        </RibbonTab>
      </RibbonTabs>
      <RibbonBody><RibbonPanelButton>多边形建模</RibbonPanelButton></RibbonBody>

      <Work>
        <Stage>
          <Viewport>
            <ViewLabel>[+][顶][真实]</ViewLabel>
            <Drawing />
            <CubeHolder><Cube /></CubeHolder>
          </Viewport>
          <SliderRow>
            <SliderPart aria-label="上一帧">&lt;</SliderPart>
            <SliderPart>0 / 100</SliderPart>
            <SliderPart aria-label="下一帧">&gt;</SliderPart>
          </SliderRow>
          <TrackBar>
            <TrackToggle aria-label="打开迷你曲线编辑器"><Icon name="trackMini" size={13} /></TrackToggle>
            <Ticks />
          </TrackBar>
        </Stage>

        <Side>
          <PanelTabs>
            {[["create", "创建"], ["modify", "修改"], ["hierarchy", "层次"], ["motion", "运动"], ["display", "显示"], ["hammer", "工具"]].map(([n, l]) => (
              <PanelTab key={n} $on={n === "hierarchy"} aria-label={l}><Icon name={n} size={14} /></PanelTab>
            ))}
          </PanelTabs>
          <Row $gap={3}>
            <NameInput aria-label="名称" defaultValue="Circle002" />
            <Swatch aria-label="颜色" />
          </Row>
          <PanelButtons>
            <PushButton $on>轴</PushButton>
            <PushButton>IK</PushButton>
            <PushButton>链接信息</PushButton>
          </PanelButtons>
          <Rollouts>
            <Section title="调整轴">
              <Group>
                <legend>移动/旋转/缩放:</legend>
                <PushButton $on>仅影响轴</PushButton>
                <PushButton>仅影响对象</PushButton>
                <PushButton>仅影响层次</PushButton>
              </Group>
              <Group>
                <legend>对齐:</legend>
                <PushButton>居中到对象</PushButton>
                <PushButton>对齐到对象</PushButton>
                <PushButton>对齐到世界</PushButton>
              </Group>
              <Group>
                <legend>轴:</legend>
                <PushButton>重置轴</PushButton>
              </Group>
            </Section>
            <Section title="工作轴" deep>
              <PushButton>编辑工作轴</PushButton>
              <PushButton>使用工作轴</PushButton>
              <Split>
                <PushButton $tone="dim">对齐到视图</PushButton>
                <PushButton $tone="dim">重置</PushButton>
              </Split>
              <Group $tight>
                <legend>把轴放置在:</legend>
                <Row $gap={4}>
                  <PushButton $tone="dim">视图</PushButton>
                  <PushButton $tone="dim">曲面</PushButton>
                </Row>
                <CheckLabel><CheckBox type="checkbox" defaultChecked />对齐到视图</CheckLabel>
              </Group>
            </Section>
            <Section title="调整变换">
              <Group>
                <legend>移动/旋转/缩放:</legend>
                <PushButton>不影响子对象</PushButton>
              </Group>
              <Group>
                <legend>重置:</legend>
                <PushButton>变换</PushButton>
                <PushButton>缩放</PushButton>
              </Group>
            </Section>
            <Section title="蒙皮姿势">
              <PushButton $tone="dim">蒙皮姿势模式</PushButton>
              <Group>
                <legend>启用:</legend>
              </Group>
            </Section>
          </Rollouts>
        </Side>
      </Work>

      <Status>
        <Listener>
          <input aria-label="宏录制器" />
          <input aria-label="MAXScript 侦听器" defaultValue="欢迎使用 MAXSc" />
        </Listener>
        <TwoRows $ml={5}>
          <Row>
            <Cell>选择了 1 个 图形</Cell>
            <SmallButton $w={18} aria-label="孤立"><Icon name="pin" size={11} /></SmallButton>
            <SmallButton $w={18} aria-label="锁定"><Icon name="lock" size={11} /></SmallButton>
            <SmallButton $w={18} aria-label="绝对模式"><Icon name="absMode" size={11} /></SmallButton>
            <Coordinate axis="X" value="-6.044" />
            <Coordinate axis="Y" value="-32.838" />
            <Coordinate axis="Z" value="0.0" />
          </Row>
          <Row>
            <Cell>单击并拖动以选择并移动对象</Cell>
            <SmallButton $w={14} $on aria-label="自适应降级"><Icon name="cube" size={11} /></SmallButton>
          </Row>
        </TwoRows>
        <TwoRows $w={67} $ml={1}>
          <Cell>栅格 = 10.0</Cell>
          <CellButton>添加时间标记</CellButton>
        </TwoRows>
        <KeyButton aria-label="设置关键点"><Icon name="key" size={18} /></KeyButton>
        <TwoRows $w={45}>
          <PushButton $tone="muted">自动关键点</PushButton>
          <PushButton $tone="muted">设置关键点</PushButton>
        </TwoRows>
        <TwoRows $w={75}>
          <Pick w={75} label="关键点对象" value="选定对象" />
          <Row>
            <SmallButton aria-label="切线"><Icon name="tangent" size={12} /></SmallButton>
            <PushButton>关键点过滤器...</PushButton>
          </Row>
        </TwoRows>
        <TwoRows $w={72} $ml={6}>
          <Row>
            {[["first", "转至开头"], ["prev", "上一帧"], ["play", "播放"], ["next", "下一帧"]].map(([n, l]) => (
              <SmallButton key={n} aria-label={l}><Icon name={n} size={9} /></SmallButton>
            ))}
            <SmallButton $w={14} aria-label="转至结尾"><Icon name="last" size={9} /></SmallButton>
          </Row>
          <Row>
            <SmallButton aria-label="关键点模式"><Icon name="keyStep" size={11} /></SmallButton>
            <SpinField><input aria-label="当前帧" defaultValue="0" /><SpinArrows /></SpinField>
          </Row>
        </TwoRows>
        <NavGrid>
          <span />
          {[["zoom", "缩放"], ["zoomAll", "缩放所有视图"], ["extents", "最大化显示"], ["extAll", "所有视图最大化显示"], ["timeCfg", "时间配置"], ["zoomRegion", "缩放区域"], ["pan", "平移"], ["orbit", "环绕"], ["maxView", "最大化视口切换"]].map(([n, l]) => (
            <SmallButton key={n} $w={14} aria-label={l}><Icon name={n} size={11} /></SmallButton>
          ))}
        </NavGrid>
      </Status>

      <Mark>
        <MarkTop>
          <b>Bai</b>
          <svg width="45" height="48" viewBox="0 0 45 48" fill="#fff" aria-hidden="true">
            <ellipse cx="6" cy="17" rx="5" ry="7" />
            <ellipse cx="17" cy="8" rx="5" ry="8" />
            <ellipse cx="31" cy="9" rx="5" ry="8" />
            <ellipse cx="40" cy="21" rx="5" ry="7" />
            <path d="M22 20c-7 0-8 8-13 12-8 5-5 15 4 15 6 0 13-1 19 0 11 1 15-10 7-16-6-5-8-11-17-11z" />
            <text x="11" y="43" fontSize="20" fontWeight="700" fill="#555">du</text>
          </svg>
          <b>经验</b>
        </MarkTop>
        <MarkUrl>jingyan.baidu.com</MarkUrl>
      </Mark>
    </Page>
  );
}
